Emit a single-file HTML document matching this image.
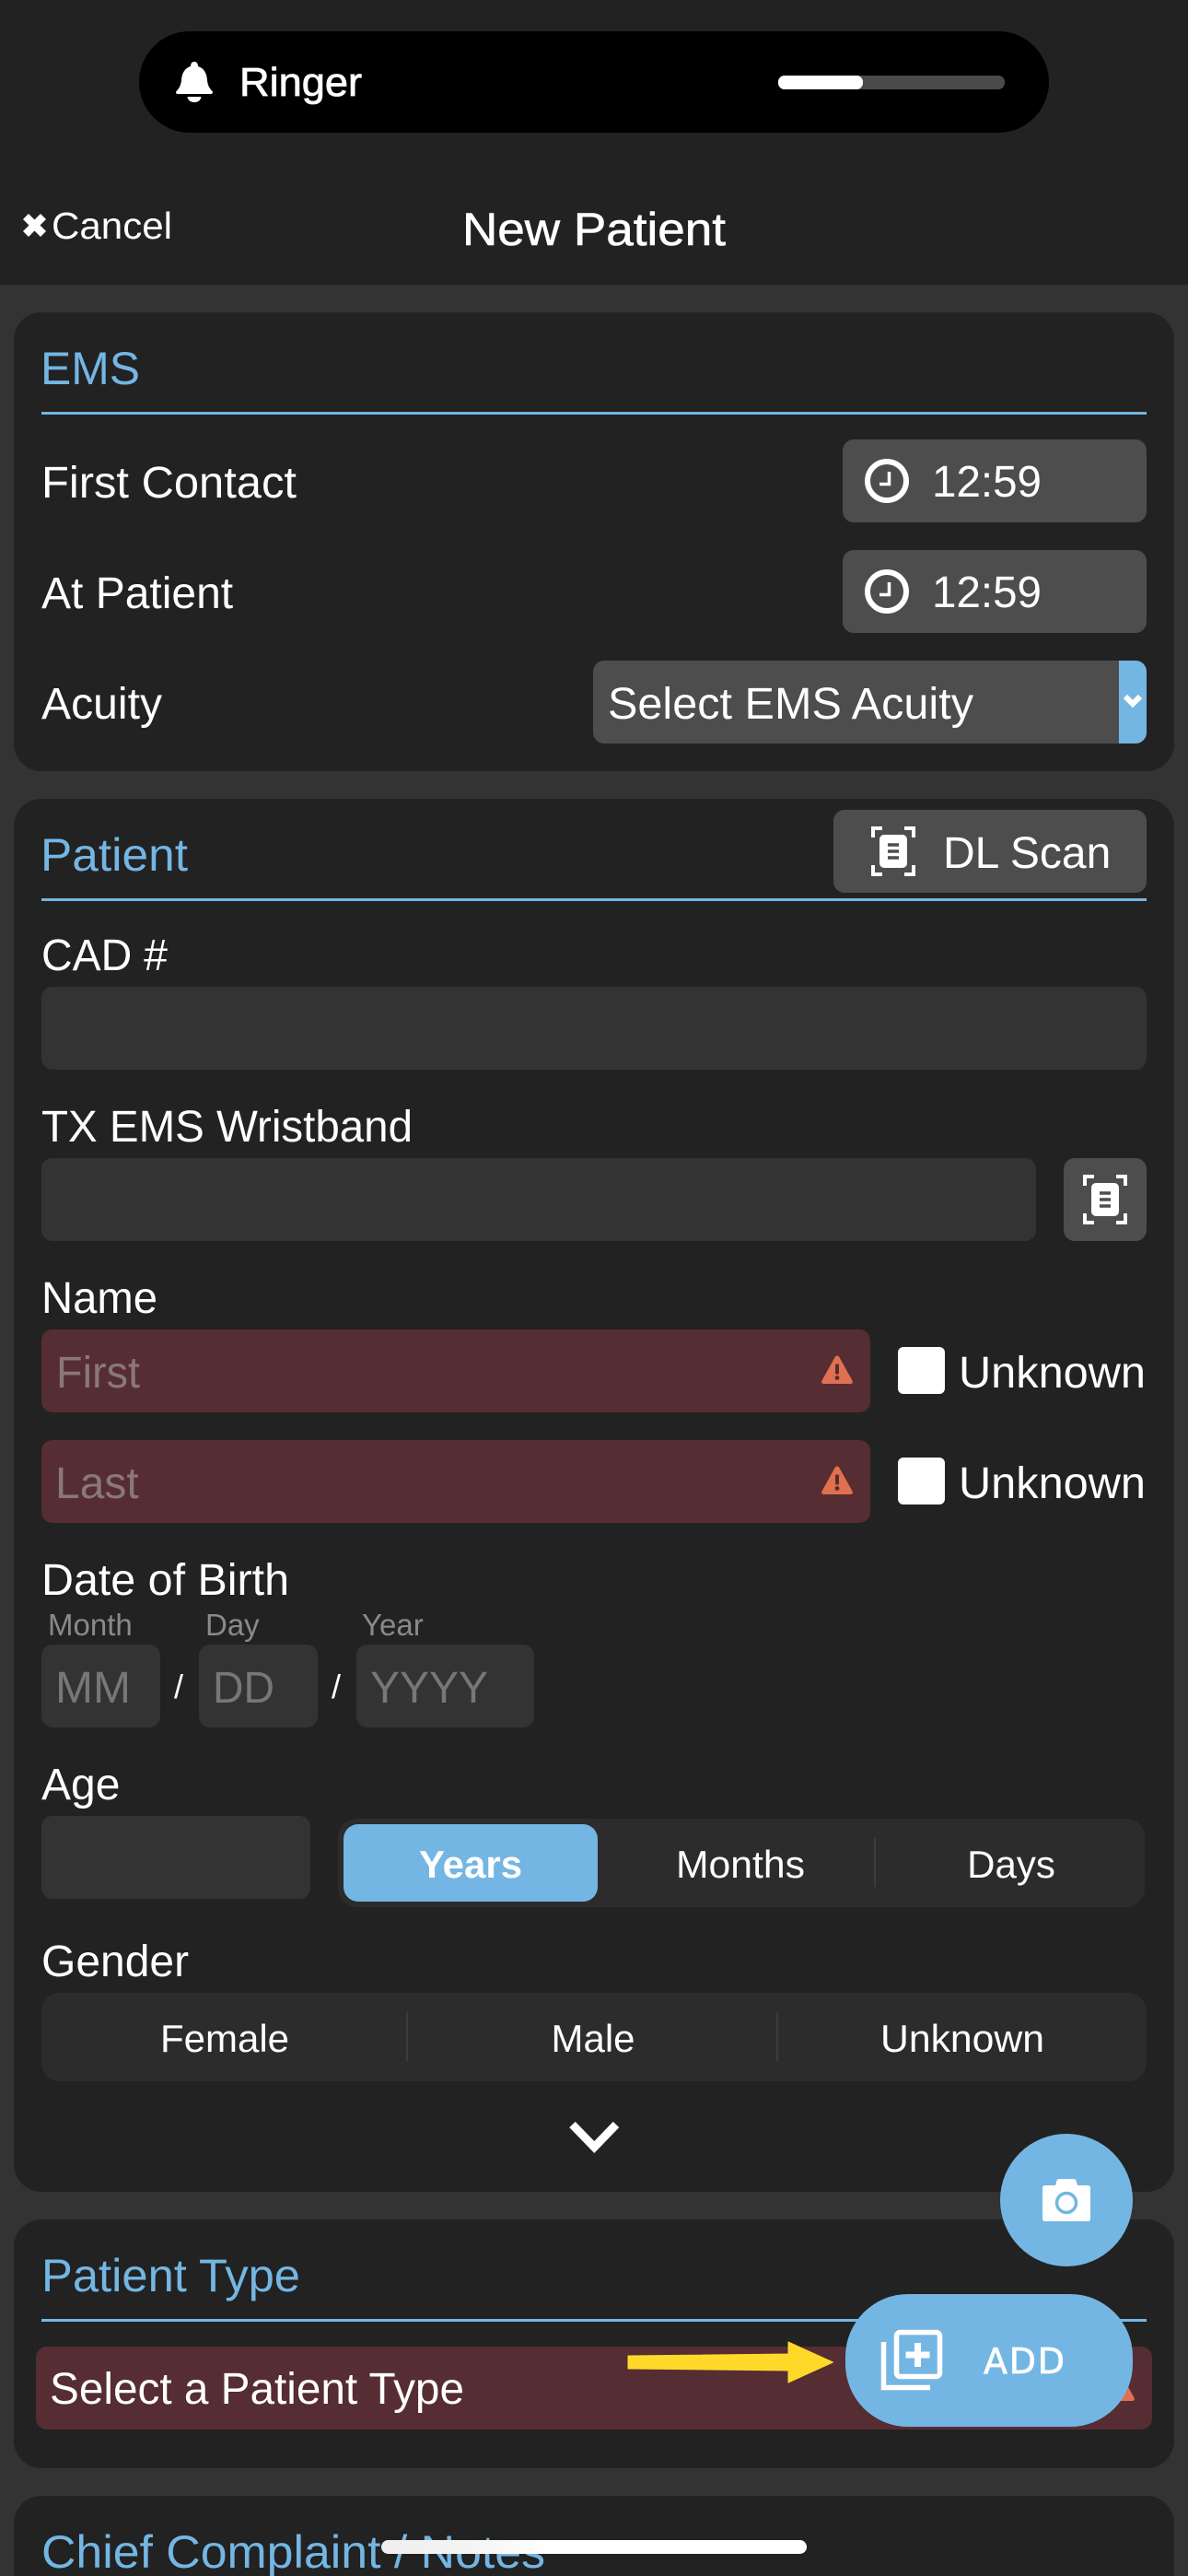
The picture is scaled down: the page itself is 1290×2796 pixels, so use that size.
<!DOCTYPE html>
<html lang="en">
<head>
<meta charset="utf-8">
<title>New Patient</title>
<style>
html,body{margin:0;padding:0;background:#333;width:1290px;height:2796px;overflow:hidden}
svg{display:block}
text{font-family:"Liberation Sans",Arial,sans-serif;fill:#fff;font-size:48px}
.h{fill:#74b6e3;font-size:50px}
.ph{fill:#8a7779}
.dp{fill:#777}
.sm{fill:#8a8a8a;font-size:33px}
.seg{font-size:42px}
</style>
</head>
<body>
<svg width="1290" height="2796" viewBox="0 0 1290 2796" xmlns="http://www.w3.org/2000/svg">
<defs>
<g id="scan">
<path d="M2 12V2H12M36 2H46V12M2 42V52H12M36 52H46V42" fill="none" stroke="#fff" stroke-width="4"/>
<rect x="9" y="9" width="30" height="36" rx="5" fill="#fff"/>
<path d="M18 20H30M18 27H30M18 34H30" stroke="#4d4d4d" stroke-width="3.500"/>
</g>
<g id="clock">
<circle cx="0" cy="0" r="21" fill="none" stroke="#fff" stroke-width="6"/>
<path d="M2.500-10V3.500H-8" fill="none" stroke="#fff" stroke-width="3.500"/>
</g>
<g id="warn">
<path d="M17 0.500C18 .5 18.800 1 19.500 2.200L33.500 27.500C34.500 29.400 33.500 31 31.500 31H2.500C.5 31-.5 29.400.5 27.500L14.500 2.200C15.200 1 16 .5 17 .5Z" fill="#e07050"/>
<rect x="15" y="9.500" width="4" height="11" rx="1" fill="#552d32"/>
<circle cx="17" cy="24.500" r="2.400" fill="#552d32"/>
</g>
</defs>

<rect width="1290" height="2796" fill="#333"/>
<rect width="1290" height="309" fill="#222"/>

<!-- Status pill -->
<rect x="151" y="34" width="988" height="110" rx="55" fill="#000"/>
<path d="M211 67C208.300 67 207 69 207 72C200.500 74 197.500 79.500 197 87C196.500 93 194 96.500 191.500 99C190.500 100.300 191.200 102 193 102H229C230.800 102 231.500 100.300 230.500 99C228 96.500 225.500 93 225 87C224.500 79.500 221.500 74 215 72C215 69 213.700 67 211 67Z" fill="#fff"/>
<path d="M203.500 105H218.500C218 109 215 111 211 111C207 111 204 109 203.500 105Z" fill="#fff"/>
<text x="260" y="104" style="font-size:44px;stroke:#fff;stroke-width:.8px" textLength="133" lengthAdjust="spacingAndGlyphs">Ringer</text>
<rect x="845" y="82" width="246" height="15" rx="7" fill="#4a4a4c"/>
<rect x="845" y="82" width="92" height="15" rx="7" fill="#fff"/>

<!-- Nav -->
<path d="M28 235L47 254M47 235L28 254" stroke="#fff" stroke-width="8.500" fill="none"/>
<text x="56" y="259" style="font-size:41px" textLength="131" lengthAdjust="spacingAndGlyphs">Cancel</text>
<text x="502" y="266" style="font-size:50px;stroke:#fff;stroke-width:.6px" textLength="286" lengthAdjust="spacingAndGlyphs">New Patient</text>

<!-- Card: EMS -->
<rect x="15" y="339" width="1260" height="498" rx="30" fill="#222"/>
<text class="h" x="44" y="417" textLength="108" lengthAdjust="spacingAndGlyphs">EMS</text>
<rect x="45" y="447" width="1200" height="3" fill="#74b6e3"/>
<text x="45" y="540" textLength="277" lengthAdjust="spacingAndGlyphs">First Contact</text>
<rect x="915" y="477" width="330" height="90" rx="12" fill="#4d4d4d"/>
<use href="#clock" x="963" y="522"/>
<text x="1012" y="539" textLength="119" lengthAdjust="spacingAndGlyphs">12:59</text>
<text x="45" y="660">At Patient</text>
<rect x="915" y="597" width="330" height="90" rx="12" fill="#4d4d4d"/>
<use href="#clock" x="963" y="642"/>
<text x="1012" y="659" textLength="119" lengthAdjust="spacingAndGlyphs">12:59</text>
<text x="45" y="780" textLength="131" lengthAdjust="spacingAndGlyphs">Acuity</text>
<rect x="644" y="717" width="601" height="90" rx="12" fill="#4d4d4d"/>
<path d="M1215 717H1233A12 12 0 0 1 1245 729V795A12 12 0 0 1 1233 807H1215Z" fill="#74b6e3"/>
<path d="M1222 756L1230 764L1238 756" fill="none" stroke="#fff" stroke-width="6"/>
<text x="660" y="780" textLength="397" lengthAdjust="spacingAndGlyphs">Select EMS Acuity</text>

<!-- Card: Patient -->
<rect x="15" y="867" width="1260" height="1512" rx="30" fill="#222"/>
<text class="h" x="44" y="945" textLength="160" lengthAdjust="spacingAndGlyphs">Patient</text>
<rect x="45" y="975" width="1200" height="3" fill="#74b6e3"/>
<rect x="905" y="879" width="340" height="90" rx="12" fill="#4d4d4d"/>
<use href="#scan" x="946" y="897"/>
<text x="1024" y="942">DL Scan</text>

<text x="45" y="1053" textLength="137" lengthAdjust="spacingAndGlyphs">CAD #</text>
<rect x="45" y="1071" width="1200" height="90" rx="12" fill="#333"/>
<text x="45" y="1239" textLength="403" lengthAdjust="spacingAndGlyphs">TX EMS Wristband</text>
<rect x="45" y="1257" width="1080" height="90" rx="12" fill="#333"/>
<rect x="1155" y="1257" width="90" height="90" rx="12" fill="#4d4d4d"/>
<use href="#scan" x="1176" y="1275"/>

<text x="45" y="1425" textLength="126" lengthAdjust="spacingAndGlyphs">Name</text>
<rect x="45" y="1443" width="900" height="90" rx="12" fill="#552d32"/>
<text class="ph" x="61" y="1506" textLength="91" lengthAdjust="spacingAndGlyphs">First</text>
<use href="#warn" x="892" y="1471"/>
<rect x="975" y="1462" width="51" height="51" rx="6" fill="#fff"/>
<text x="1041" y="1506" textLength="203" lengthAdjust="spacingAndGlyphs">Unknown</text>
<rect x="45" y="1563" width="900" height="90" rx="12" fill="#552d32"/>
<text class="ph" x="60" y="1626">Last</text>
<use href="#warn" x="892" y="1591"/>
<rect x="975" y="1582" width="51" height="51" rx="6" fill="#fff"/>
<text x="1041" y="1626" textLength="203" lengthAdjust="spacingAndGlyphs">Unknown</text>

<text x="45" y="1731" textLength="269" lengthAdjust="spacingAndGlyphs">Date of Birth</text>
<text class="sm" x="52" y="1775">Month</text>
<text class="sm" x="223" y="1775">Day</text>
<text class="sm" x="393" y="1775">Year</text>
<rect x="45" y="1785" width="129" height="90" rx="12" fill="#333"/>
<text class="dp" x="60" y="1848" textLength="82" lengthAdjust="spacingAndGlyphs">MM</text>
<text x="189" y="1843" style="font-size:36px">/</text>
<rect x="216" y="1785" width="129" height="90" rx="12" fill="#333"/>
<text class="dp" x="231" y="1848" textLength="67" lengthAdjust="spacingAndGlyphs">DD</text>
<text x="360" y="1843" style="font-size:36px">/</text>
<rect x="387" y="1785" width="193" height="90" rx="12" fill="#333"/>
<text class="dp" x="402" y="1848">YYYY</text>

<text x="45" y="1953">Age</text>
<rect x="45" y="1971" width="292" height="90" rx="12" fill="#333"/>
<rect x="367" y="1974" width="876" height="96" rx="20" fill="#2c2c2c"/>
<rect x="373" y="1980" width="276" height="84" rx="16" fill="#74b6e3"/>
<text class="seg" x="511" y="2038" text-anchor="middle" style="font-weight:700">Years</text>
<text class="seg" x="804" y="2038" text-anchor="middle" textLength="140" lengthAdjust="spacingAndGlyphs">Months</text>
<rect x="949" y="1995" width="2" height="53" fill="#3c3c3c"/>
<text class="seg" x="1098" y="2038" text-anchor="middle">Days</text>

<text x="45" y="2145">Gender</text>
<rect x="45" y="2163" width="1200" height="96" rx="20" fill="#2c2c2c"/>
<text class="seg" x="244" y="2227" text-anchor="middle">Female</text>
<rect x="441" y="2184" width="2" height="53" fill="#3c3c3c"/>
<text class="seg" x="644" y="2227" text-anchor="middle">Male</text>
<rect x="843" y="2184" width="2" height="53" fill="#3c3c3c"/>
<text class="seg" x="1045" y="2227" text-anchor="middle" textLength="178" lengthAdjust="spacingAndGlyphs">Unknown</text>
<path d="M621.500 2306L645.300 2330.500L669 2306" fill="none" stroke="#fff" stroke-width="9"/>

<!-- Card: Patient Type -->
<rect x="15" y="2409" width="1260" height="270" rx="30" fill="#222"/>
<text class="h" x="45" y="2487" textLength="281" lengthAdjust="spacingAndGlyphs">Patient Type</text>
<rect x="45" y="2517" width="1200" height="3" fill="#74b6e3"/>
<rect x="39" y="2547" width="1212" height="90" rx="12" fill="#552d32"/>
<text x="54" y="2609" textLength="450" lengthAdjust="spacingAndGlyphs">Select a Patient Type</text>
<use href="#warn" x="1198" y="2575"/>

<!-- Card: Chief Complaint -->
<rect x="15" y="2709" width="1260" height="200" rx="30" fill="#222"/>
<text class="h" x="45" y="2787" textLength="547" lengthAdjust="spacingAndGlyphs">Chief Complaint / Notes</text>

<!-- Camera FAB -->
<circle cx="1158" cy="2388" r="72" fill="#74b6e3"/>
<path d="M1132 2375Q1132 2372 1135 2372H1146L1147.500 2367Q1148 2365 1150 2365H1166Q1168 2365 1168.500 2367L1170 2372H1181Q1184 2372 1184 2375V2408Q1184 2411 1181 2411H1135Q1132 2411 1132 2408Z" fill="#fff"/>
<circle cx="1158" cy="2391" r="10.500" fill="#fff" stroke="#74b6e3" stroke-width="3.500"/>

<!-- Add FAB -->
<rect x="918" y="2490" width="312" height="144" rx="68" fill="#74b6e3"/>
<path d="M959.500 2542V2591.500H1010" fill="none" stroke="#fff" stroke-width="5.500"/>
<rect x="973.500" y="2531.500" width="47" height="48" rx="4" fill="none" stroke="#fff" stroke-width="5.500"/>
<path d="M996.500 2543V2569M983.500 2556H1009.500" stroke="#fff" stroke-width="7"/>
<text x="1068" y="2576" style="font-family:'DejaVu Sans','Liberation Sans',sans-serif;font-size:38px;stroke:#fff;stroke-width:.7px" textLength="88" lengthAdjust="spacing">ADD</text>

<!-- Yellow arrow -->
<path d="M682 2557L856 2555V2542L904.500 2564L856 2586V2573L682 2571Z" fill="#ffd92a" stroke="#ffd92a" stroke-width="1" stroke-linejoin="round"/>

<!-- Home indicator -->
<defs><linearGradient id="hg" x1="0" x2="1" y1="0" y2="0"><stop offset="0" stop-color="#eee"/><stop offset=".2" stop-color="#f4f4f4"/><stop offset=".4" stop-color="#fff"/></linearGradient></defs>
<rect x="414" y="2757" width="462" height="15" rx="7.500" fill="url(#hg)"/>
</svg>
</body>
</html>
